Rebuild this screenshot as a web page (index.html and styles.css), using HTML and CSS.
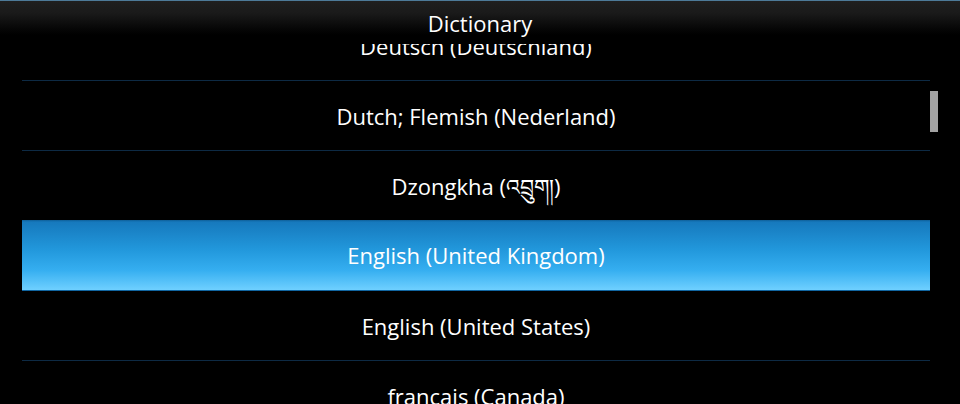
FILE: index.html
```html
<!DOCTYPE html>
<html>
<head>
<meta charset="utf-8">
<link rel="stylesheet" href="styles.css">
</head>
<body>
<div class="screen">
  <ul class="list">
    <li class="row">Deutsch (Deutschland)</li>
    <li class="row">Dutch; Flemish (Nederland)</li>
    <li class="row">Dzongkha (འབྲུག།)</li>
    <li class="row selected">English (United Kingdom)</li>
    <li class="row">English (United States)</li>
    <li class="row">français (Canada)</li>
  </ul>
  <div class="scrollbar"></div>
  <header class="header">Dictionary</header>
</div>
</body>
</html>
```
FILE: styles.css
```css
html, body {
  margin: 0;
  padding: 0;
  background: #000;
}
.screen {
  position: relative;
  width: 960px;
  height: 404px;
  overflow: hidden;
  background: #000;
  font-family: "Open Sans", "Noto Sans", "DejaVu Sans", sans-serif;
  color: #fff;
}
.list {
  list-style: none;
  margin: 0;
  padding: 11px 30px 0 22px;
}
.row {
  height: 69px;
  border-bottom: 1px solid #0d2a44;
  display: flex;
  align-items: center;
  justify-content: center;
  font-size: 22px;
  line-height: 30px;
}
.row span, .row {
  white-space: nowrap;
}
.row.selected {
  margin-top: -1px;
  height: 70px;
  border-bottom: 1px solid transparent;
  background: linear-gradient(#0f5f98 0px, #1679bd 2px, #2298dc 30px, #35aef0 50px, #6fd0ff 70px);
}
.scrollbar {
  position: absolute;
  left: 930px;
  top: 91px;
  width: 8px;
  height: 41px;
  background: #a3a3a3;
}
.header {
  position: absolute;
  left: 0;
  top: 0;
  width: 960px;
  height: 44px;
  box-sizing: border-box;
  border-top: 1px solid #4d7a98;
  background: linear-gradient(#1f1f1f 0px, #1a1a1a 12px, #060606 28px, #000 34px);
  display: flex;
  justify-content: center;
  padding-top: 7px;
  font-size: 22px;
  line-height: 30px;
}
```
